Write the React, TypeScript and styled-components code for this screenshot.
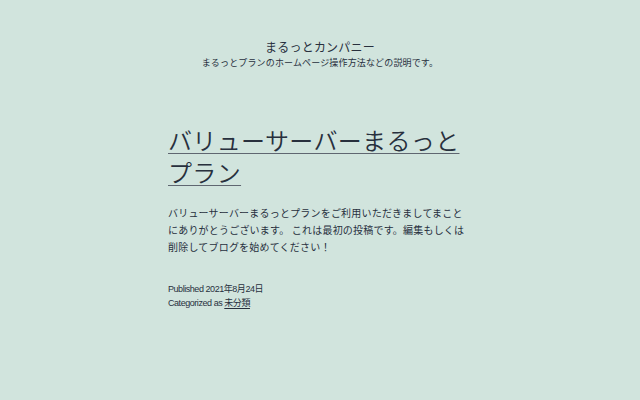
import React from 'react';
import styled, { createGlobalStyle } from 'styled-components';

const GlobalStyle = createGlobalStyle`
  html, body {
    margin: 0;
    padding: 0;
    background: #d1e4dd;
  }
  body {
    color: #28303d;
    font-family: "Liberation Sans", "Noto Sans CJK JP", sans-serif;
  }
`;

const Page = styled.div`
  width: 640px;
  height: 400px;
  background: #d1e4dd;
  display: flex;
  flex-direction: column;
  align-items: center;
`;

const Header = styled.header`
  padding-top: 38px;
  display: flex;
  flex-direction: column;
  align-items: center;
`;

const SiteTitle = styled.div`
  font-family: "Noto Sans CJK JP", sans-serif;
  font-size: 12px;
  letter-spacing: 0.2px;
  line-height: 17px;
`;

const SiteDescription = styled.div`
  margin-top: 2px;
  font-family: "Noto Sans CJK JP", sans-serif;
  font-size: 9px;
  letter-spacing: 0.15px;
  line-height: 12px;
`;

const Article = styled.article`
  width: 304px;
  margin-top: 55px;
`;

const EntryTitle = styled.h2`
  margin: 0;
  font-family: "Noto Sans CJK JP", sans-serif;
  font-weight: 350;
  font-size: 24px;
  letter-spacing: 0.35px;
  line-height: 32px;
`;

const TitleLink = styled.a`
  color: inherit;
  text-decoration: underline;
  text-decoration-thickness: 1px;
  text-decoration-color: #5f6670;
  text-underline-offset: 3px;
`;

const Content = styled.p`
  margin: 16px 0 0;
  font-family: "Noto Sans CJK JP", sans-serif;
  font-size: 10px;
  letter-spacing: 0.2px;
  line-height: 17px;
`;

const Meta = styled.footer`
  margin-top: 27px;
  font-size: 9px;
  letter-spacing: -0.45px;
  line-height: 14px;
`;

const MetaLink = styled.a`
  color: inherit;
  text-decoration: underline;
  text-underline-offset: 2px;
`;

export default function App() {
  return (
    <>
      <GlobalStyle />
      <Page>
        <Header>
          <SiteTitle>まるっとカンパニー</SiteTitle>
          <SiteDescription>まるっとプランのホームページ操作方法などの説明です。</SiteDescription>
        </Header>
        <Article>
          <EntryTitle>
            <TitleLink href="#">バリューサーバーまるっとプラン</TitleLink>
          </EntryTitle>
          <Content>
            バリューサーバーまるっとプランをご利用いただきましてまことにありがとうございます。 これは最初の投稿です。編集もしくは削除してブログを始めてください！
          </Content>
          <Meta>
            <div>Published 2021年8月24日</div>
            <div>
              Categorized as <MetaLink href="#">未分類</MetaLink>
            </div>
          </Meta>
        </Article>
      </Page>
    </>
  );
}
